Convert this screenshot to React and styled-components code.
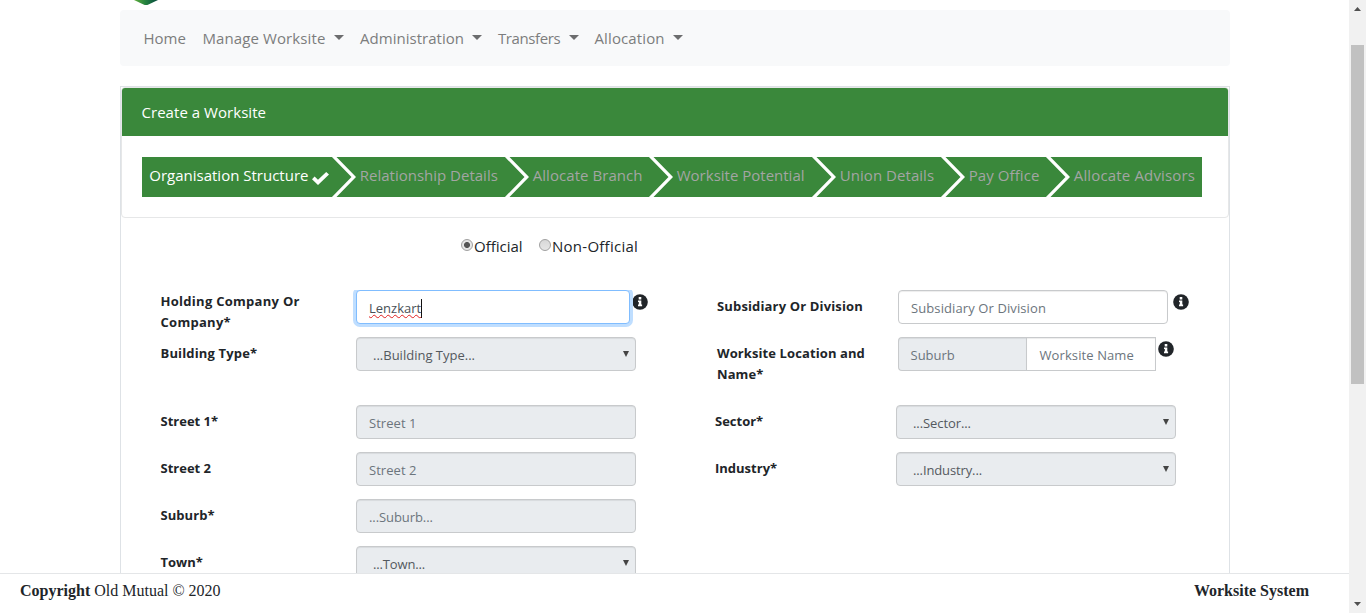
import React from "react";
import styled, { createGlobalStyle, css } from "styled-components";

const GlobalStyle = createGlobalStyle`
  *, *::before, *::after { box-sizing: border-box; }
  body {
    margin: 0;
    overflow: hidden;
    background: #fff;
    color: #212529;
    font-family: "Open Sans", "Noto Sans", sans-serif;
    font-size: 15px;
    line-height: 24px;
  }
`;

const Screen = styled.div`
  display: flex;
  height: 613px;
  width: 1366px;
  overflow: hidden;
`;
const Page = styled.div`
  display: flex;
  flex-direction: column;
  width: 1349px;
`;
const Content = styled.main`
  flex: 1;
  min-height: 0;
  overflow: hidden;
  padding: 0 119px 0 120px;
`;
const LogoStrip = styled.div`
  height: 10px;
  padding-left: 14px;
  svg { display: block; }
`;
const Navbar = styled.nav`
  display: flex;
  align-items: center;
  height: 56px;
  padding: 0 16px 0 15.5px;
  border-radius: 4px;
  background: #f8f9fa;
  color: #7c7d7d;
`;
const NavItem = styled.a`
  display: flex;
  align-items: center;
  justify-content: space-between;
  width: ${(p) => p.$w}px;
  padding: 0 8px;
  white-space: nowrap;
  letter-spacing: ${(p) => p.$ls || 0}px;
`;
const Caret = styled.span`
  border: 5px solid transparent;
  border-top-color: #6c6d6e;
  border-bottom: 0;
  margin-bottom: 1px;
`;
const Card = styled.section`
  margin-top: 20px;
  height: 700px;
  border: 1px solid #dee2e6;
`;
const WizardCard = styled.div`
  height: 131px;
  border: 1px solid #e6e7e8;
  border-radius: 4px;
`;
const CardHeader = styled.header`
  height: 48px;
  padding: 12px 19.5px;
  border-radius: 3px 3px 0 0;
  background: #3a883b;
  color: #fff;
  letter-spacing: 0.04px;
`;
const Steps = styled.div`
  display: flex;
  width: 1060px;
  height: 40px;
  margin: 21px 0 0 20px;
  background: #3a883b;
`;
const Step = styled.div`
  display: flex;
  align-items: flex-start;
  width: ${(p) => p.$w}px;
  padding-left: ${(p) => (p.$active ? 7.25 : 0)}px;
  color: ${(p) => (p.$active ? "#fff" : "#a3a5a3")};
  white-space: nowrap;
`;
const StepText = styled.span`
  padding-top: 6px;
  letter-spacing: ${(p) => p.$ls || 0}px;
`;
const Chevron = styled.svg`
  flex: none;
  width: 25px;
  height: 42px;
  margin: -1px 3.75px -1px -1px;
  fill: #fff;
`;
const Check = styled.svg`
  width: 17px;
  height: 13px;
  margin: 15px 0 0 4px;
  fill: #fff;
`;
const Radios = styled.div`
  display: flex;
  gap: 16px;
  padding: 16px 0 0 340px;
  height: 72px;
`;
const RadioLabel = styled.label`
  display: flex;
  gap: 1px;
  height: 24px;
  width: ${(p) => p.$w}px;
  white-space: nowrap;
  letter-spacing: ${(p) => p.$ls || 0}px;
`;
const RadioDot = styled.span`
  flex: none;
  width: 12px;
  height: 12px;
  margin: 5px 0 0;
  border: 1px solid #a0a0a0;
  border-radius: 50%;
  background: ${(p) =>
    p.$on ? "radial-gradient(circle, #555 0 2.6px, #e6e6e6 3.4px)" : "linear-gradient(#d8d8d8, #e6e6e6)"};
`;
const Form = styled.div`
  display: grid;
  grid-template-columns: 556.5px 1fr;
  grid-template-rows: 47px 68px 47px 47px 47px;
  padding-left: 39.5px;
  font-size: 13px;
  line-height: 21px;
`;
const Field = styled.div`
  display: flex;
  align-items: flex-start;
  margin-left: ${(p) => p.$shift || 0}px;
`;
const Label = styled.div`
  width: ${(p) => p.$w || 195.5}px;
  padding-top: ${(p) => (p.$tight ? 1 : 6)}px;
  font-weight: 700;
  color: #212529;
  white-space: pre;
  letter-spacing: ${(p) => p.$ls || 0}px;
`;
const Control = styled.div`
  display: flex;
  align-items: center;
  width: ${(p) => p.$w || 280}px;
  height: 34px;
  padding: 2px 12px 0;
  border: 1px solid #c8cacc;
  border-radius: 4px;
  background: ${(p) => (p.$off ? "#e9ecef" : "#fff")};
  box-shadow: inset 0 1px 1px rgba(0, 0, 0, 0.075);
  color: #6c757d;
  white-space: nowrap;
  letter-spacing: ${(p) => p.$ls || 0}px;
  ${(p) =>
    p.$focus &&
    css`
      border-color: #80bdff;
      box-shadow: 0 0 0 3px #bfdeff;
      clip-path: inset(0 -4px -4px -4px);
      color: #495057;
    `}
  ${(p) =>
    p.$select &&
    css`
      justify-content: space-between;
      padding: 2px 6px 0 16px;
      color: #54595e;
    `}
  ${(p) => p.$join === "left" && "border-radius: 4px 0 0 4px; border-right: 0; padding-left: 11.5px;"}
  ${(p) => p.$join === "right" && "border-radius: 0; padding-left: 12.5px;"}
`;
const Typed = styled.span`
  height: 19px;
  line-height: 19px;
  border-right: 1px solid #111;
  text-decoration: underline wavy #e02020 1px;
  text-decoration-skip-ink: none;
  text-underline-offset: 1px;
`;
const Arrow = styled.svg`
  width: 6px;
  height: 6px;
  margin-bottom: 3px;
  fill: #444;
`;
const Info = styled.svg`
  width: 16px;
  height: 16px;
  margin: 4px 0 0 ${(p) => p.$gap}px;
`;
const Footer = styled.footer`
  display: flex;
  justify-content: space-between;
  height: 40px;
  padding: 5px 40px 0 20px;
  border-top: 1px solid #e4e6e8;
  background: #fff;
  font: 16px/24px "Liberation Serif", serif;
`;
const Scrollbar = styled.div`
  display: flex;
  flex-direction: column;
  align-items: center;
  width: 17px;
  background: #f1f1f1;
  svg { display: block; fill: #505050; }
`;
const Thumb = styled.div`
  width: 13px;
  height: 339px;
  margin: 34px 0 218px;
  background: #c1c1c1;
`;

const navItems = [
  { text: "Home", w: 59 },
  { text: "Manage Worksite", w: 157.5, ls: 0.1, menu: true },
  { text: "Administration", w: 138, ls: 0.03, menu: true },
  { text: "Transfers", w: 96.5, ls: -0.4, menu: true },
  { text: "Allocation", w: 104.5, ls: 0.12, menu: true },
];

const steps = [
  { text: "Organisation Structure", w: 190, active: true },
  { text: "Relationship Details", w: 173 },
  { text: "Allocate Branch", w: 144, ls: 0.05 },
  { text: "Worksite Potential", w: 163 },
  { text: "Union Details", w: 129, ls: 0.05 },
  { text: "Pay Office", w: 105, ls: 0.08 },
  { text: "Allocate Advisors", w: 156, ls: 0.16 },
];

const InfoIcon = ({ gap }) => (
  <Info $gap={gap} viewBox="0 0 16 16">
    <circle cx="8" cy="8" r="7.8" fill="#212529" />
    <path fill="#fff" d="M6.7 3h2.6v2.4H6.7zM6 6.4h3.3v4.2h.8v1.6H6v-1.6h.8V8H6z" />
  </Info>
);

const Select = ({ children, ls }) => (
  <Control $off $select $ls={ls}>
    <span>{children}</span>
    <Arrow viewBox="0 0 6 6"><path d="M0 0h6L3 6z" /></Arrow>
  </Control>
);

export default function App() {
  return (
    <Screen>
      <GlobalStyle />
      <Page>
        <Content>
          <LogoStrip>
            <svg width="26" height="5" viewBox="0 0 26 5">
              <defs>
                <linearGradient id="leaf">
                  <stop offset="0" stopColor="#5fae3c" />
                  <stop offset="0.5" stopColor="#23803f" />
                  <stop offset="1" stopColor="#07483f" />
                </linearGradient>
              </defs>
              <path d="M0 0h24L14.500 4.400q-2.500 1-5 0z" fill="url(#leaf)" />
            </svg>
          </LogoStrip>
          <Navbar>
            {navItems.map((n) => (
              <NavItem key={n.text} $w={n.w} $ls={n.ls}>
                <span>{n.text}</span>
                {n.menu && <Caret />}
              </NavItem>
            ))}
          </Navbar>
          <Card>
            <WizardCard>
              <CardHeader>Create a Worksite</CardHeader>
              <Steps>
                {steps.map((s) => (
                  <Step key={s.text} $w={s.w} $active={s.active}>
                    {!s.active && (
                      <Chevron viewBox="0 0 25 42">
                        <path d="M0 0h4.500L25 21 4.500 42H0L20.500 21z" />
                      </Chevron>
                    )}
                    <StepText $ls={s.ls}>{s.text}</StepText>
                    {s.active && (
                      <Check viewBox="0 0 17 13">
                        <path d="M0 7.200 2.600 4.600 6 7.800 14.200 0 17 2.600 6 13z" />
                      </Check>
                    )}
                  </Step>
                ))}
              </Steps>
            </WizardCard>
            <Radios>
              <RadioLabel $w={62}><RadioDot $on />Official</RadioLabel>
              <RadioLabel $w={99} $ls={0.26}><RadioDot />Non-Official</RadioLabel>
            </Radios>
            <Form>
              <Field>
                <Label $tight $ls={0.28}>{"Holding Company Or\nCompany*"}</Label>
                <Control $focus $w={274}><Typed>Lenzkart</Typed></Control>
                <InfoIcon gap={1.5} />
              </Field>
              <Field>
                <Label $w={181} $ls={0.15}>Subsidiary Or Division</Label>
                <Control $w={270} $ls={0.1}>Subsidiary Or Division</Control>
                <InfoIcon gap={5.4} />
              </Field>
              <Field>
                <Label $ls={0.16}>Building Type*</Label>
                <Select>...Building Type...</Select>
              </Field>
              <Field>
                <Label $w={181} $ls={0.1}>{"Worksite Location and\nName*"}</Label>
                <Control $off $w={128} $join="left">Suburb</Control>
                <Control $w={130} $join="right" $ls={0.1}>Worksite Name</Control>
                <InfoIcon gap={2.4} />
              </Field>
              <Field>
                <Label>Street 1*</Label>
                <Control $off $ls={0.05}>Street 1</Control>
              </Field>
              <Field $shift={-2}>
                <Label $w={181}>Sector*</Label>
                <Select ls={-0.08}>...Sector...</Select>
              </Field>
              <Field>
                <Label>Street 2</Label>
                <Control $off $ls={0.05}>Street 2</Control>
              </Field>
              <Field $shift={-2}>
                <Label $w={181}>Industry*</Label>
                <Select ls={-0.12}>...Industry...</Select>
              </Field>
              <Field>
                <Label $ls={0.05}>Suburb*</Label>
                <Control $off $ls={-0.08}>...Suburb...</Control>
              </Field>
              <span />
              <Field>
                <Label>Town*</Label>
                <Select ls={-0.15}>...Town...</Select>
              </Field>
            </Form>
          </Card>
        </Content>
        <Footer>
          <span><b>Copyright</b> Old Mutual © 2020</span>
          <b>Worksite System</b>
        </Footer>
      </Page>
      <Scrollbar>
        <svg width="7" height="11" viewBox="0 0 7 11"><path d="M0 11 3.500 7 7 11z" /></svg>
        <Thumb />
        <svg width="7" height="4" viewBox="0 0 7 4"><path d="M0 0h7L3.500 4z" /></svg>
      </Scrollbar>
    </Screen>
  );
}
